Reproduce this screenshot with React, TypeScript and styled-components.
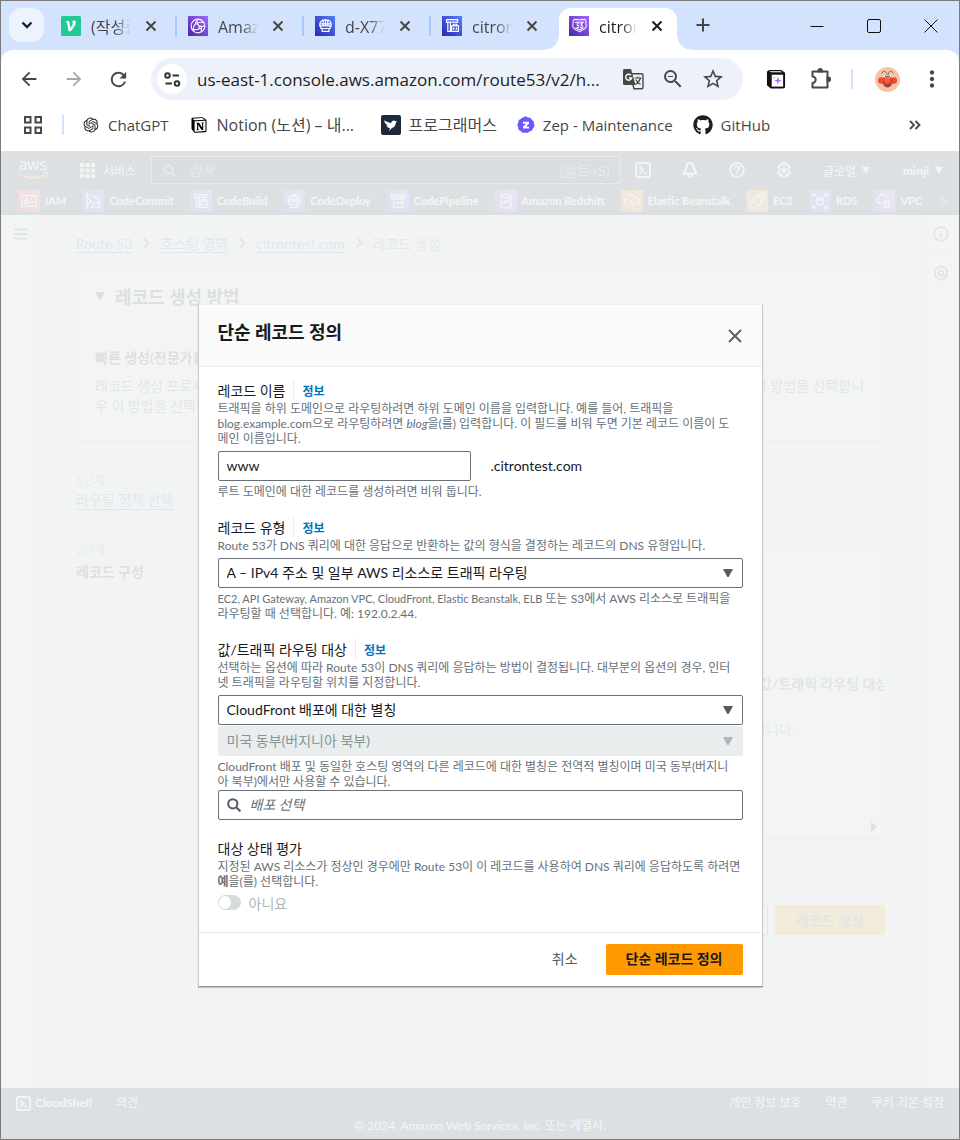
import React, { useState } from 'react';
import styled, { createGlobalStyle } from 'styled-components';
import { FaAws, FaGithub } from 'react-icons/fa';
import { RiOpenaiFill, RiNotionFill } from 'react-icons/ri';
import {
  MdArrowBack,
  MdArrowForward,
  MdMoreVert,
  MdOutlineZoomOut,
  MdRefresh,
  MdStarOutline,
} from 'react-icons/md';

const CONSOLE_FONT = 'Lato, "Noto Sans CJK KR", sans-serif';
const BROWSER_FONT = '"Open Sans", "Noto Sans CJK KR", sans-serif';

const GlobalStyle = createGlobalStyle`
  *, *::before, *::after { box-sizing: border-box; }
  body { margin: 0; background: #f2f4f4; }
  h1, h2, h3, p, ul, ol { margin: 0; padding: 0; }
  ul, ol { list-style: none; }
  button, input, select { font: inherit; color: inherit; margin: 0; }
  button { padding: 0; border: 0; background: none; cursor: pointer; }
  svg { display: block; flex: none; }
`;

const Window = styled.div`
  display: flex;
  flex-direction: column;
  min-height: 100vh;
  border: 1px solid #7b7b7b;
  font-family: ${BROWSER_FONT};
  overflow: hidden;
`;

/* ---------- browser: tab strip ---------- */

const TabStrip = styled.div`
  display: flex;
  height: 49px;
  padding: 7px 0 0 8px;
  background: #d3e3fd;
`;

const TabSearch = styled.button`
  display: grid;
  place-items: center;
  width: 35px;
  height: 34px;
  margin-right: 5px;
  border-radius: 12px;
  background: #ecf2fe;
`;

const Tab = styled.div<{ $active?: boolean }>`
  position: relative;
  display: flex;
  align-items: center;
  width: ${(p) => (p.$active ? 118 : 127)}px;
  height: 42px;
  margin-left: ${(p) => (p.$active ? 2 : 0)}px;
  padding: 0 ${(p) => (p.$active ? 12 : 17)}px 7px ${(p) => (p.$active ? 10 : 12)}px;
  border-radius: 12px 12px 0 0;
  background: ${(p) => (p.$active ? '#fff' : 'transparent')};
  color: ${(p) => (p.$active ? '#1f1f1f' : '#474747')};

  &::before,
  &::after {
    content: '';
    display: ${(p) => (p.$active ? 'block' : 'none')};
    position: absolute;
    bottom: 0;
    width: 14px;
    height: 14px;
  }
  &::before {
    left: -14px;
    background: radial-gradient(circle at 0 0, transparent 13px, #fff 14px);
  }
  &::after {
    right: -14px;
    background: radial-gradient(circle at 100% 0, transparent 13px, #fff 14px);
  }
`;

const TabTitle = styled.span`
  flex: 1;
  margin: 3px 0 0 10px;
  overflow: hidden;
  white-space: nowrap;
  font-size: 16px;
  line-height: 24px;
  mask-image: linear-gradient(to right, #000 60%, transparent);
`;

const TabClose = styled.button`
  display: grid;
  place-items: center;
  width: 16px;
  height: 16px;
  margin-left: 12px;
`;

const TabDivider = styled.span`
  align-self: center;
  width: 2px;
  height: 20px;
  margin: 0 -1px 7px;
  background: #a8c7fa;
`;

const TabAdd = styled.button`
  display: grid;
  place-items: center;
  width: 36px;
  height: 34px;
  margin-left: 8px;
`;

const WindowButtons = styled.div`
  display: flex;
  margin-left: auto;
`;

const WindowButton = styled.button`
  display: grid;
  place-items: center;
  width: 57px;
  height: 36px;
`;

/* ---------- browser: toolbar and bookmarks ---------- */

const ChromeBacking = styled.div`
  background: #d3e3fd;
`;

const Chrome = styled.div`
  padding-bottom: 8px;
  border-radius: 12px 12px 0 0;
  background: #fff;
`;

const Toolbar = styled.div`
  display: flex;
  align-items: center;
  padding: 8px 8px 8px 5px;
  color: #474747;
`;

const ToolButton = styled.button<{ $w?: number; $muted?: boolean }>`
  display: grid;
  flex: none;
  place-items: center;
  width: ${(p) => p.$w ?? 45}px;
  height: 40px;
  color: ${(p) => (p.$muted ? '#a9a9a9' : '#474747')};
`;

const AddressBar = styled.div`
  display: flex;
  flex: 1;
  align-items: center;
  min-width: 0;
  height: 42px;
  margin: 0 10px;
  padding: 0 10px 0 6px;
  border-radius: 21px;
  background: #ecf1fa;
`;

const SiteInfo = styled.button`
  display: grid;
  place-items: center;
  flex: none;
  width: 30px;
  height: 30px;
  border-radius: 50%;
  background: #fff;
`;

const AddressInput = styled.input`
  flex: 1;
  min-width: 0;
  margin-left: 10px;
  padding: 0;
  border: 0;
  outline: 0;
  background: none;
  color: #1f1f1f;
  font-size: 17px;
  text-overflow: ellipsis;
`;

const BarDivider = styled.span<{ $gap?: number }>`
  width: 2px;
  height: 20px;
  margin: 0 ${(p) => p.$gap ?? 0}px;
  background: #d3e3fd;
`;

const Bookmarks = styled.nav`
  display: flex;
  align-items: center;
  height: 35px;
  padding: 0 34px 2px 22px;
`;

const BookmarkList = styled.ul`
  display: flex;
  flex: 1;
  gap: 20px;
  margin-left: 18px;
`;

const Bookmark = styled.a<{ $korean?: boolean }>`
  display: flex;
  align-items: center;
  gap: 8px;
  color: #474747;
  font-size: ${(p) => (p.$korean ? 16 : 15)}px;
  line-height: 24px;
  white-space: nowrap;
  text-decoration: none;
`;

const BookmarkTitle = styled.span<{ $cut?: boolean }>`
  min-width: ${(p) => (p.$cut ? 144 : 0)}px;
`;

const AppsButton = styled.button`
  margin-right: 19px;
`;

/* ---------- console: global navigation ---------- */

const Console = styled.div`
  position: relative;
  display: flex;
  flex: 1;
  flex-direction: column;
  font-family: ${CONSOLE_FONT};
  font-size: 14px;
  color: #16191f;
`;

const GlobalNav = styled.header`
  background: #232f3e;
  color: #fff;
`;

const NavRow = styled.div`
  display: flex;
  align-items: center;
  height: 38px;
  padding: 0 16px 0 17px;
  font-size: 12px;
`;

const NavDivider = styled.span`
  width: 1px;
  height: 20px;
  background: #414d5c;
`;

const Logo = styled(FaAws)`
  margin-right: 16px;
`;

const NavButton = styled.button<{ $caret?: boolean; $last?: boolean }>`
  display: flex;
  flex: none;
  align-items: center;
  gap: ${(p) => (p.$caret ? 6 : 8)}px;
  padding: 0 ${(p) => (p.$last ? 0 : 15)}px 0 ${(p) => (p.$last ? 17 : 15)}px;
`;

const SearchBox = styled.label`
  display: flex;
  flex: 1;
  align-items: center;
  min-width: 0;
  height: 28px;
  padding: 0 9px 0 11px;
  border: 1px solid #879596;
  background: #0f1b2a;
  color: #879596;
  font-size: 14px;
`;

const SearchInput = styled.input`
  flex: 1;
  min-width: 0;
  padding: 0;
  margin-left: 12px;
  border: 0;
  outline: 0;
  background: none;
  font-style: italic;
  &::placeholder { color: #879596; opacity: 1; }
`;

const Favorites = styled.ul`
  display: flex;
  align-items: center;
  gap: 16px;
  height: 26px;
  padding: 0 12px 3px 17px;
  overflow: hidden;
  font-size: 11px;
  font-weight: 700;
`;

const Favorite = styled.a`
  display: flex;
  align-items: center;
  gap: 5px;
  color: #fff;
  white-space: nowrap;
  text-decoration: none;
`;

const FavoritesMore = styled.li`
  margin-left: auto;
  color: #687078;
`;

const ServiceTile = styled.span<{ $bg: string; $size?: number }>`
  display: grid;
  flex: none;
  place-items: center;
  width: ${(p) => p.$size ?? 22}px;
  height: ${(p) => p.$size ?? 22}px;
  background: ${(p) => p.$bg};
  color: #fff;
`;

/* ---------- console: page behind the dialog ---------- */

const Workspace = styled.div`
  display: flex;
  flex: 1;
  background: #f2f3f3;
`;

const Rail = styled.aside<{ $side: 'left' | 'right' }>`
  flex: none;
  width: ${(p) => (p.$side === 'left' ? 39 : 38)}px;
  border: 0 solid #d5dbdb;
  border-${(p) => (p.$side === 'left' ? 'right' : 'left')}-width: 1px;
  background: #fafafa;
  color: #545b64;
`;

const RailButton = styled.button`
  display: grid;
  place-items: center;
  width: 100%;
  height: 38px;
  & + & { border-top: 1px solid #d5dbdb; }
`;

const Main = styled.main`
  flex: 1;
  min-width: 0;
  padding: 17px 36px 40px;
`;

const Breadcrumbs = styled.ol`
  display: flex;
  align-items: center;
  gap: 10px;
  height: 22px;
  color: #687078;
`;

const Link = styled.a`
  color: #0073bb;
  text-decoration: none;
  border-bottom: 1px solid #0073bb;
  line-height: 16px;
`;

const Panel = styled.section`
  border: 1px solid #eaeded;
  border-bottom-color: #aab7b8;
  background: #fff;
`;

const MethodPanel = styled(Panel)`
  margin-top: 16px;
`;

const MethodTitle = styled.h2`
  display: flex;
  align-items: center;
  gap: 10px;
  height: 59px;
  padding: 0 18px 8px;
  border-bottom: 1px solid #eaeded;
  font-size: 18px;
`;

const MethodColumns = styled.div`
  display: grid;
  grid-template-columns: 1fr 1fr;
  gap: 40px;
  padding: 18px 18px 24px;
`;

const MethodName = styled.h3`
  margin-bottom: 8px;
  font-size: 14px;
  line-height: 20px;
  white-space: nowrap;
`;

const MethodText = styled.p`
  color: #545b64;
  line-height: 20px;
`;

const Wizard = styled.div`
  display: grid;
  grid-template-columns: 180px minmax(0, 1fr);
  gap: 20px;
  margin-top: 30px;
`;

const Step = styled.li`
  display: flex;
  flex-direction: column;
  align-items: flex-start;
  height: 70px;
  font-weight: 700;
  & + & {
    padding-top: 11px;
    border-top: 1px solid #d5dbdb;
  }
  &:first-child { height: 58px; }
`;

const StepNumber = styled.small`
  color: #879596;
  font-size: 12px;
  font-weight: 400;
  line-height: 20px;
`;

const StepLink = styled(Link)`
  font-weight: 400;
  line-height: 18px;
`;

const RecordsPanel = styled(Panel)`
  height: 288px;
  margin-top: 80px;
  padding-top: 112px;
  overflow: hidden;
`;

const RecordsTable = styled.table`
  width: 100%;
  border-collapse: collapse;
  white-space: nowrap;

  th {
    height: 37px;
    max-width: 0;
    padding: 0 0 0 482px;
    border: 1px solid #eaeded;
    border-width: 1px 0;
    overflow: hidden;
    color: #545b64;
    text-align: left;
  }
  td {
    height: 54px;
    padding: 0 89px 0 0;
    color: #687078;
    text-align: right;
  }
`;

const ScrollEnd = styled.div`
  display: flex;
  justify-content: flex-end;
  margin-top: 60px;
  padding: 5px;
  border-top: 1px solid #f2f3f3;
`;

const Actions = styled.div`
  display: flex;
  justify-content: flex-end;
  gap: 7px;
  margin-top: 66px;
`;

const PageButton = styled.button<{ $primary?: boolean }>`
  height: 30px;
  width: 110px;
  border: 1px solid ${(p) => (p.$primary ? '#ff9900' : '#545b64')};
  border-radius: 2px;
  background: ${(p) => (p.$primary ? '#ff9900' : '#fff')};
  color: #545b64;
  font-weight: 700;
`;

const Footer = styled.footer`
  padding: 5px 15px 3px;
  background: #232f3e;
  color: #fff;
  font-size: 12px;
  line-height: 20px;
`;

const FooterRow = styled.div`
  display: flex;
  gap: 24px;
`;

const FooterLink = styled.a<{ $push?: boolean; $strong?: boolean }>`
  display: flex;
  align-items: center;
  gap: 4px;
  margin-left: ${(p) => (p.$push ? 'auto' : '0')};
  color: #fff;
  font-weight: ${(p) => (p.$strong ? 700 : 400)};
  text-decoration: none;
`;

const Copyright = styled.p`
  padding-top: 3px;
  text-align: center;
`;

/* ---------- dialog ---------- */

const Overlay = styled.div`
  position: absolute;
  inset: 0;
  display: flex;
  align-items: center;
  justify-content: center;
  background: rgba(242, 244, 244, 0.9);
`;

const Dialog = styled.form`
  width: 100%;
  max-width: 565px;
  border: 1px solid #c4cacd;
  border-top-color: #eaeded;
  border-bottom-color: #8b9296;
  background: #fff;
  box-shadow: 0 1px 1px rgba(0, 28, 36, 0.2);
`;

const DialogHeader = styled.header`
  display: flex;
  justify-content: space-between;
  height: 62px;
  padding: 14px 20px 0 19px;
  border-bottom: 1px solid #eaeded;
  background: #fafafa;
`;

const DialogTitle = styled.h1`
  font-size: 18px;
  line-height: 26px;
`;

const DialogClose = styled.button`
  align-self: flex-start;
  margin-top: 10px;
  color: #545b64;
`;

const DialogBody = styled.div`
  display: flex;
  flex-direction: column;
  gap: 18px;
  padding: 13px 19px 19px;
`;

const Field = styled.div``;

const FieldHead = styled.div`
  display: flex;
  align-items: center;
  height: 21px;
`;

const FieldLabel = styled.label`
  line-height: 21px;
`;

const InfoLink = styled.a`
  height: 20px;
  margin-left: 8px;
  padding-left: 8px;
  border-left: 1px solid #eaeded;
  color: #0073bb;
  font-size: 12px;
  font-weight: 700;
  line-height: 23px;
  text-decoration: none;
`;

const Note = styled.p<{ $place?: 'above' | 'below' }>`
  margin: ${(p) => (p.$place === 'above' ? '0 0 5px' : p.$place === 'below' ? '3px 0 0' : '0')};
  color: #687078;
  font-size: 12px;
  line-height: 15px;
  white-space: nowrap;
`;

const ServiceNames = styled.span`
  font-size: 11px;
`;

const NameRow = styled.div`
  display: flex;
  align-items: center;
  gap: 20px;
`;

const TextInput = styled.input`
  width: 253px;
  height: 30px;
  padding: 0 8px;
  border: 1px solid #687078;
  border-radius: 2px;
  background: #fff;
`;

const SelectBox = styled.div`
  position: relative;
  display: flex;
  align-items: center;
  & + & { margin-top: 1px; }
  svg {
    position: absolute;
    right: 10px;
    pointer-events: none;
    color: #545b64;
  }
  select:disabled + svg { color: #aab7b8; }
`;

const Select = styled.select`
  width: 100%;
  height: 30px;
  padding: 0 30px 0 8px;
  border: 1px solid #687078;
  border-radius: 2px;
  appearance: none;
  background: #fff;
  &:disabled {
    border-color: #eaeded;
    background: #eaeded;
    color: #879596;
    opacity: 1;
  }
`;

const DistributionBox = styled.label`
  display: flex;
  align-items: center;
  gap: 9px;
  height: 30px;
  margin-top: 1px;
  padding: 0 8px;
  border: 1px solid #687078;
  border-radius: 2px;
  color: #545b64;
`;

const DistributionInput = styled.input`
  flex: 1;
  padding: 0;
  border: 0;
  outline: 0;
  background: none;
  &::placeholder {
    color: #687078;
    font-style: italic;
    opacity: 1;
  }
`;

const ToggleRow = styled.label`
  display: flex;
  align-items: center;
  gap: 8px;
  height: 20px;
  margin-top: 4px;
  color: #aab7b8;
`;

const Toggle = styled.input`
  appearance: none;
  width: 23px;
  height: 15px;
  border-radius: 8px;
  background: #d5dbdb;
  &::before {
    content: '';
    display: block;
    width: 12px;
    height: 13px;
    margin: 1px;
    border-radius: 50%;
    background: #fff;
  }
`;

const DialogFooter = styled.footer`
  display: flex;
  justify-content: flex-end;
  gap: 8px;
  padding: 11px 19px;
  border-top: 1px solid #eaeded;
`;

const DialogButton = styled.button<{ $primary?: boolean }>`
  height: 31px;
  padding: 0 20px 2px;
  border-radius: 2px;
  background: ${(p) => (p.$primary ? '#ff9900' : 'transparent')};
  color: ${(p) => (p.$primary ? '#16191f' : '#545b64')};
  font-weight: ${(p) => (p.$primary ? 700 : 400)};
`;

/* ---------- drawings ---------- */

type Drawing = { size?: number };

const Line: React.FC<{ size?: number; w?: number; children: React.ReactNode }> = ({ size = 18, w = 1.4, children }) => (
  <svg width={size} height={size} viewBox="0 0 20 20" fill="none" stroke="currentColor" strokeWidth={w} aria-hidden>
    {children}
  </svg>
);

const Triangle: React.FC<{ dir?: 'down' | 'right'; size?: number }> = ({ dir = 'down', size = 10 }) => (
  <svg width={size} height={size} viewBox="0 0 10 10" fill="currentColor" aria-hidden>
    <path d={dir === 'down' ? 'M0 1h10L5.6 9H4.4z' : 'M2 0v10l6-5z'} />
  </svg>
);

const Magnifier: React.FC<Drawing> = ({ size = 14 }) => (
  <svg width={size} height={size} viewBox="0 0 14 14" fill="none" stroke="currentColor" strokeWidth="2" aria-hidden>
    <circle cx="5.8" cy="5.8" r="4.6" />
    <path d="M9 9l4.4 4.4" />
  </svg>
);

const Shell: React.FC<Drawing> = ({ size = 16 }) => (
  <svg width={size} height={size} viewBox="0 0 16 16" fill="none" stroke="currentColor" strokeWidth="2" aria-hidden>
    <rect x="1" y="1" width="14" height="14" rx="1.5" />
    <path d="M4.5 4.5L8 8l-3.5 3.5M9 11.2h3" />
  </svg>
);

const GlobeStack: React.FC<Drawing> = ({ size }) => (
  <Line size={size}>
    <path d="M4.5 10.5H3.2C2.5 6 5.5 3 10 3s7.5 3 6.8 7.5h-1.3M3.2 8h13.600M10 3v7.5M7.5 10.5C6.5 7 7.5 4 10 3c2.5 1 3.5 4 2.5 7.5" />
    <path d="M4.5 10.5h11v3h-11zM6 13.5h8V17H6z" />
  </Line>
);

const BuildBlocks: React.FC<Drawing> = ({ size }) => (
  <Line size={size}>
    <path d="M3 3h13v3H3zM4.5 6v11h3V6M9 10.5h8V17H9zM11 10.5V8.5h4v2M12 12.5l-1 1.2 1 1.2M14 12.5l1 1.2-1 1.2" />
  </Line>
);

const CommitBranches: React.FC<Drawing> = ({ size }) => (
  <Line size={size}>
    <path d="M3.5 4v12M3.5 6l5 4-5 5M8 4h3l2 3h4v10H8l3-4M12 10l-1 1.5 1 1.5M15 10l1 1.5-1 1.5" />
    <circle cx="3.5" cy="3" r="1" />
    <circle cx="3.5" cy="17" r="1" />
  </Line>
);

const PipelineGlyph: React.FC<Drawing> = ({ size }) => (
  <Line size={size}>
    <path d="M2.5 3h15v4.5h-15zM5 7.5V17h10V7.5M2.5 5.200h15M8 11l-1.2 1.3L8 13.600M12 11l1.2 1.3-1.2 1.3M10.5 10.5l-1 3.600" />
  </Line>
);

const IdCard: React.FC<Drawing> = ({ size }) => (
  <Line size={size}>
    <rect x="2" y="4" width="16" height="12" />
    <path d="M5 9.5h4V13H5zM6 9.5V7h2v2.5M11.5 8h2M14.5 8h1M11.5 11.5h4" />
  </Line>
);

const Cylinder: React.FC<Drawing> = ({ size }) => (
  <Line size={size}>
    <ellipse cx="10" cy="4.5" rx="5.5" ry="2" />
    <path d="M4.5 4.5v11c0 1 2.5 2 5.5 2s5.5-1 5.5-2v-11M7 13.5l2-4 2 2 2-3.5" />
  </Line>
);

const CloudTree: React.FC<Drawing> = ({ size }) => (
  <Line size={size}>
    <path d="M6.5 14H5a3.2 3.2 0 0 1-.4-6.3C5 4.8 7 3 9.5 3c2.2 0 3.7 1.3 4.3 3.2C16.3 6.5 18 8 18 10.3c0 2.2-1.5 3.7-4 3.7M10 18V7M10 12L7 9.5M10 14.5l3.2-2.7" />
  </Line>
);

const Squares: React.FC<Drawing> = ({ size }) => (
  <Line size={size}>
    <path d="M7 6h7.5v8H7zM11 6V2h7v7h-3.5M7 11H2v7h7.5v-4M10 4v2M12.5 14v2M5 8.5h2M14.5 11.5h2" />
  </Line>
);

const DatabaseArrows: React.FC<Drawing> = ({ size }) => (
  <Line size={size}>
    <ellipse cx="10" cy="7.5" rx="3.5" ry="1.5" />
    <path d="M6.5 7.5v5c0 .8 1.5 1.5 3.5 1.5s3.5-.7 3.5-1.5v-5M2 5V2h3M2 2l3 3M15 2h3v3M18 2l-3 3M2 15v3h3M2 18l3-3M18 15v3h-3M18 18l-3-3" />
  </Line>
);

const CloudShieldGlyph: React.FC<Drawing> = ({ size }) => (
  <Line size={size}>
    <path d="M8 12.5H5A3 3 0 0 1 4.6 6.6C5 4 7 2.5 9.2 2.5c2 0 3.5 1 4 3 1.8.1 3.3 1 3.8 2.5" />
    <circle cx="13.5" cy="13.5" r="4" />
    <path d="M12.2 10v7M14.800 10v7" />
  </Line>
);

const NetworkGlobe: React.FC<Drawing> = ({ size }) => (
  <Line size={size} w={1.2}>
    <circle cx="10" cy="10" r="7.6" />
    <circle cx="8.5" cy="6.5" r="1.3" />
    <circle cx="12.5" cy="11.5" r="1.4" />
    <path d="M7.5 7.5c-2 1.5-3 4.500-2.3 8.300M9.300 7.600l2.300 2.800M9.800 6.300c2.500-.8 4.700-.5 6.200-.1M8.500 5.200C8.800 4 9.500 3 10.500 2.500M11.800 12.700c-1.800 1-4 1.600-6.300 1.300M13.500 12.500c.5 1.500.5 3-.2 4.300M13.800 10.800c1-.8 2-1 3.500-.8" />
  </Line>
);

const RouteShield: React.FC<Drawing> = ({ size }) => (
  <Line size={size} w={1.2}>
    <path d="M4 2.500c1 .8 2 .9 3 .2 1 .6 2 .8 3 .8s2-.2 3-.8c1 .7 2 .6 3-.2l1.800 2.500c-1 2 .2 4 .2 6 0 3-4.500 4-8 6.500C6.500 15 2 14 2 11c0-2 1.200-4 .2-6z" />
    <path d="M4.500 6c1 .5 2 .3 2.800-.2 1.700.5 3.700.5 5.400 0 .8.500 1.800.7 2.800.2M5 12.500c1.500 1 3.500 1.700 5 2.700 1.500-1 3.500-1.700 5-2.700M9.300 8H7.300v1.800c2.500-.3 2.500 2.500.2 2.500h-.8M10.800 8h2.400l-1.300 1.600c2 0 2 2.700 0 2.700h-1.200" />
  </Line>
);

const CloseGlyph = () => (
  <svg width="12" height="12" viewBox="0 0 12 12" stroke="currentColor" strokeWidth="2" aria-hidden>
    <path d="M1.500 1.500l9 9M10.500 1.500l-9 9" />
  </svg>
);

const Velog = () => (
  <svg width="20" height="20" viewBox="0 0 20 20" aria-hidden>
    <rect width="20" height="20" rx="1.500" fill="#20c997" />
    <path d="M5 5.500l3-.8L9.400 12c1.600-2 2.600-4 2.300-5.400-.1-.5-.6-.8-.3-1.300.5-1 3.200-1.300 3.400.6.200 2.600-2.400 6.400-5.300 9.300H7.600L6 6.700l-1-.3z" fill="#fff" />
  </svg>
);

const Programmers = () => (
  <svg width="20" height="20" viewBox="0 0 20 20" aria-hidden>
    <rect width="20" height="20" rx="2" fill="#1e2a3c" />
    <path d="M3 5.500l7 2.800c.5-2 2-3 3.700-2.600.8.2 1.300.7 2.800.8-1.300.6-1.600 1-1.800 2.200-.4 2.300-1.600 3.700-3.900 4.300L8.200 16.200l.7-3.200C7 12.800 6 12 5.500 10.500l1.300-.2C4.800 9.200 3.800 8 3 5.500z" fill="#fff" />
  </svg>
);

const Zep = () => (
  <svg width="18" height="18" viewBox="0 0 18 18" aria-hidden>
    <path d="M6.200 1.500C8 .1 9.500.4 10.800 1.600c1.700-.2 3.300.4 3.900 2.200 1.700.8 2.600 2.200 2.200 4 .8 1.700.7 3.400-.9 4.500-.3 1.900-1.500 3-3.400 3-1.200 1.500-2.700 2.200-4.400 1.300-1.800.6-3.400.1-4.300-1.600C2 14.300.9 13 1.200 11.200.1 9.700.1 8.200 1.300 6.700 1.200 4.900 2 3.500 3.800 3 4.300 2.200 5.200 1.700 6.200 1.500z" fill="#6758ff" />
    <path d="M6 5.800h6v2L8.800 10.600H12v2H6v-2l3.200-2.800H6z" fill="#fff" />
  </svg>
);

const TranslateGlyph = () => (
  <svg width="21" height="21" viewBox="0 0 21 21" fill="none" aria-hidden>
    <path d="M9 4.800h9.500a1.500 1.500 0 0 1 1.500 1.500v12a1.500 1.500 0 0 1-1.500 1.500h-7.500l-1-3.800" stroke="#474747" strokeWidth="1.400" />
    <path d="M11.500 9h7M15 7.500V9M17.500 9c-.8 3-2.500 5-5 6.500M12.800 10.500c1 2 2.700 3.800 4.700 5" stroke="#474747" strokeWidth="1.200" />
    <path d="M1.500 0H8l4.500 16H1.500A1.500 1.500 0 0 1 0 14.500v-13A1.500 1.500 0 0 1 1.500 0z" fill="#474747" />
    <path d="M8 6.300A3 3 0 1 0 8.600 9H5.800" stroke="#fff" strokeWidth="1.400" />
  </svg>
);

const PuzzleGlyph = () => (
  <svg width="24" height="24" viewBox="0 0 24 24" fill="none" stroke="currentColor" strokeWidth="2" aria-hidden>
    <path d="M4 4.500H18.500V20.500H3.500v-4.600a3.200 3.200 0 0 0 0-6.400V4.500z" strokeLinejoin="round" />
    <path d="M9.500 4.500V3.600a1.700 1.700 0 0 1 3.400 0v.9zM18.500 10.500h.9a1.700 1.700 0 0 1 0 3.400h-.9z" fill="currentColor" />
  </svg>
);

const NotionSpark = () => (
  <svg width="20" height="20" viewBox="0 0 21 21" aria-hidden>
    <path d="M1 2.500L3.500 1H16l4 3v15.500L18 20.500H5L1 17z" fill="#111" />
    <path d="M6 6h12v12.500H6z" fill="#fff" />
    <path d="M3.500 3l1-.7h11l1.500 1.200H5.500z" fill="#fff" />
    <path d="M12.500 8l1 3.200 3.200 1-3.200 1-1 3.200-1-3.200-3.200-1 3.200-1z" fill="#b26bff" />
    <path d="M8.500 7l.5 1.500 1.500.5-1.500.5L8.500 11 8 9.500 6.500 9 8 8.500z" fill="#ffc266" />
  </svg>
);

const Avatar = () => (
  <svg width="25" height="25" viewBox="0 0 25 25" aria-hidden>
    <circle cx="12.500" cy="12.500" r="12.500" fill="#f6c4a4" />
    <path d="M12 8C11 3.500 9 3 6.500 6.500M13 8c1-4.500 3-5 5.500-1.500" fill="none" stroke="#7d6054" />
    <circle cx="6.200" cy="13.500" r="3.200" fill="#ee4b34" />
    <circle cx="18.800" cy="13.500" r="3.200" fill="#ee4b34" />
    <ellipse cx="12.500" cy="14.500" rx="5" ry="5.500" fill="#c8442f" />
    <circle cx="12.500" cy="13" r="3.200" fill="#ff5a3c" />
    <path d="M8.500 17c2 1.500 6 1.500 8 0-1 4.500-7 4.500-8 0z" fill="#8d4450" />
    <ellipse cx="10.500" cy="9" rx="1.300" ry="1.600" fill="#fff" />
    <ellipse cx="14.500" cy="9" rx="1.300" ry="1.600" fill="#fff" />
    <circle cx="10.800" cy="9.200" r="0.800" fill="#33211c" />
    <circle cx="14.200" cy="9.200" r="0.800" fill="#33211c" />
  </svg>
);

const Crumb = () => (
  <svg width="8" height="12" viewBox="0 0 8 12" fill="none" stroke="currentColor" strokeWidth="2" aria-hidden>
    <path d="M1.500 1l5 5-5 5" />
  </svg>
);

/* ---------- data ---------- */

const PURPLE = 'linear-gradient(45deg, #4d27a8, #a166ff)';
const BLUE = 'linear-gradient(45deg, #2e27ad, #527fff)';
const ORANGE = 'linear-gradient(45deg, #c8511b, #ff9900)';
const RED = 'linear-gradient(45deg, #bd0816, #ff5252)';

const tabs = [
  { title: '(작성중)', icon: <Velog /> },
  { title: 'Amazon', icon: <ServiceTile $bg={PURPLE} $size={20}><NetworkGlobe size={18} /></ServiceTile> },
  { title: 'd-X77A', icon: <ServiceTile $bg={BLUE} $size={20}><GlobeStack size={17} /></ServiceTile> },
  { title: 'citront', icon: <ServiceTile $bg={BLUE} $size={20}><BuildBlocks size={17} /></ServiceTile> },
  { title: 'citront', icon: <ServiceTile $bg={PURPLE} $size={20}><RouteShield size={17} /></ServiceTile> },
];

const bookmarks = [
  { title: 'ChatGPT', icon: <RiOpenaiFill size={18} color="#222" /> },
  { title: 'Notion (노션) – 내...', icon: <RiNotionFill size={20} color="#000" />, korean: true, cut: true },
  { title: '프로그래머스', icon: <Programmers />, korean: true },
  { title: 'Zep - Maintenance', icon: <Zep /> },
  { title: 'GitHub', icon: <FaGithub size={20} color="#1b1f23" /> },
];

const favorites = [
  { name: 'IAM', bg: RED, icon: <IdCard /> },
  { name: 'CodeCommit', bg: BLUE, icon: <CommitBranches /> },
  { name: 'CodeBuild', bg: BLUE, icon: <BuildBlocks /> },
  { name: 'CodeDeploy', bg: BLUE, icon: <GlobeStack /> },
  { name: 'CodePipeline', bg: BLUE, icon: <PipelineGlyph /> },
  { name: 'Amazon Redshift', bg: PURPLE, icon: <Cylinder /> },
  { name: 'Elastic Beanstalk', bg: ORANGE, icon: <CloudTree /> },
  { name: 'EC2', bg: ORANGE, icon: <Squares /> },
  { name: 'RDS', bg: BLUE, icon: <DatabaseArrows /> },
  { name: 'VPC', bg: PURPLE, icon: <CloudShieldGlyph /> },
];

/* ---------- sections ---------- */

const Browser = () => (
  <>
    <TabStrip>
      <TabSearch aria-label="탭 검색">
        <svg width="12" height="8" viewBox="0 0 12 8" fill="none" stroke="#1f1f1f" strokeWidth="2.400" aria-hidden>
          <path d="M1.500 1.500L6 6l4.500-4.500" />
        </svg>
      </TabSearch>
      {tabs.map((tab, i) => (
        <React.Fragment key={i}>
          <Tab $active={i === 4}>
            {tab.icon}
            <TabTitle>{tab.title}</TabTitle>
            <TabClose aria-label="탭 닫기"><CloseGlyph /></TabClose>
          </Tab>
          {i < 3 && <TabDivider />}
        </React.Fragment>
      ))}
      <TabAdd aria-label="새 탭">
        <svg width="14" height="14" viewBox="0 0 14 14" stroke="#474747" strokeWidth="2" aria-hidden>
          <path d="M7 0.500v13M0.500 7h13" />
        </svg>
      </TabAdd>
      <WindowButtons>
        <WindowButton aria-label="최소화">
          <svg width="14" height="14" viewBox="0 0 14 14" stroke="#111" aria-hidden><path d="M0.500 7.500h13" /></svg>
        </WindowButton>
        <WindowButton aria-label="최대화">
          <svg width="14" height="14" viewBox="0 0 14 14" stroke="#111" fill="none" aria-hidden>
            <rect x="0.500" y="0.500" width="13" height="13" rx="1.500" />
          </svg>
        </WindowButton>
        <WindowButton aria-label="닫기">
          <svg width="14" height="14" viewBox="0 0 14 14" stroke="#111" aria-hidden><path d="M0.500 0.500l13 13M13.500 0.500l-13 13" /></svg>
        </WindowButton>
      </WindowButtons>
    </TabStrip>
    <ChromeBacking>
      <Chrome>
        <Toolbar>
          <ToolButton aria-label="뒤로"><MdArrowBack size={22} /></ToolButton>
          <ToolButton aria-label="앞으로" $muted><MdArrowForward size={22} /></ToolButton>
          <ToolButton aria-label="새로고침"><MdRefresh size={23} /></ToolButton>
          <AddressBar>
            <SiteInfo aria-label="사이트 정보">
              <svg width="17" height="15" viewBox="0 0 17 15" fill="none" stroke="#303030" strokeWidth="1.900" aria-hidden>
                <circle cx="3.500" cy="3.500" r="2.300" />
                <path d="M8.500 3.500H15M1.500 11.500H8" />
                <circle cx="13" cy="11.500" r="2.300" />
              </svg>
            </SiteInfo>
            <AddressInput aria-label="주소" readOnly value="us-east-1.console.aws.amazon.com/route53/v2/h..." />
            <ToolButton $w={40} aria-label="번역"><TranslateGlyph /></ToolButton>
            <ToolButton $w={40} aria-label="축소"><MdOutlineZoomOut size={24} /></ToolButton>
            <ToolButton $w={40} aria-label="북마크 추가"><MdStarOutline size={24} /></ToolButton>
          </AddressBar>
          <ToolButton aria-label="Notion"><NotionSpark /></ToolButton>
          <ToolButton aria-label="확장 프로그램"><PuzzleGlyph /></ToolButton>
          <BarDivider $gap={8} />
          <ToolButton $w={52} aria-label="프로필"><Avatar /></ToolButton>
          <ToolButton $w={38} aria-label="메뉴"><MdMoreVert size={26} /></ToolButton>
        </Toolbar>
        <Bookmarks aria-label="북마크">
          <AppsButton aria-label="앱">
            <svg width="20" height="20" viewBox="0 0 20 20" fill="none" stroke="#474747" strokeWidth="2" aria-hidden>
              <path d="M2 2h5.500v5.500H2zM12.500 2H18v5.500h-5.500zM2 12.500h5.500V18H2zM12.500 12.500H18V18h-5.500z" />
            </svg>
          </AppsButton>
          <BarDivider />
          <BookmarkList>
            {bookmarks.map((b) => (
              <li key={b.title}>
                <Bookmark href="#" $korean={b.korean}>
                  {b.icon}
                  <BookmarkTitle $cut={b.cut}>{b.title}</BookmarkTitle>
                </Bookmark>
              </li>
            ))}
          </BookmarkList>
          <ToolButton $w={20} aria-label="더보기">
            <svg width="12" height="10" viewBox="0 0 12 10" fill="none" stroke="#474747" strokeWidth="1.800" aria-hidden>
              <path d="M1 1l4 4-4 4M6.500 1l4 4-4 4" />
            </svg>
          </ToolButton>
        </Bookmarks>
      </Chrome>
    </ChromeBacking>
  </>
);

const ConsoleNav = () => (
  <GlobalNav>
    <NavRow>
      <svg width="0" height="0" aria-hidden>
        <linearGradient id="aws-ink" x1="0" y1="0" x2="0" y2="1">
          <stop offset="0.640" stopColor="#fff" />
          <stop offset="0.640" stopColor="#ff9900" />
        </linearGradient>
      </svg>
      <Logo size={30} fill="url(#aws-ink)" aria-label="AWS" />
      <NavDivider />
      <NavButton>
        <svg width="15" height="15" viewBox="0 0 15 15" fill="currentColor" aria-hidden>
          {[0, 5.5, 11].map((y) => [0, 5.5, 11].map((x) => <rect key={`${x}-${y}`} x={x} y={y} width="4" height="4" />))}
        </svg>
        서비스
      </NavButton>
      <SearchBox>
        <Magnifier size={13} />
        <SearchInput aria-label="검색" placeholder="검색" />
        [알트+S]
      </SearchBox>
      <NavButton aria-label="CloudShell"><Shell /></NavButton>
      <NavDivider />
      <NavButton aria-label="알림">
        <svg width="16" height="16" viewBox="0 0 16 16" fill="none" stroke="currentColor" strokeWidth="2" aria-hidden>
          <path d="M8 1C5.500 1 4.500 3 4.500 5.500L1.500 11.500h13l-3-6C11.500 3 10.500 1 8 1zM6 12.500c0 3 4 3 4 0" />
        </svg>
      </NavButton>
      <NavDivider />
      <NavButton aria-label="도움말">
        <svg width="16" height="16" viewBox="0 0 16 16" fill="none" stroke="currentColor" strokeWidth="1.800" aria-hidden>
          <circle cx="8" cy="8" r="6.800" />
          <path d="M5.800 6.500c0-3 4.500-2.800 4.500-.3C10.300 7.800 8 7.800 8 9.600M8 10.800v1.700" />
        </svg>
      </NavButton>
      <NavDivider />
      <NavButton aria-label="설정">
        <svg width="16" height="16" viewBox="0 0 16 16" fill="none" stroke="currentColor" strokeWidth="2" aria-hidden>
          <path d="M6.500 1.200h3l.6 2 2-.5 1.800 2.600L12.600 7v2l1.300 1.700-1.800 2.600-2-.5-.6 2h-3l-.6-2-2 .5-1.800-2.600L3.400 9V7L2.100 5.300l1.800-2.600 2 .5z" />
          <circle cx="8" cy="8" r="1.800" />
        </svg>
      </NavButton>
      <NavDivider />
      <NavButton $caret>글로벌<Triangle size={8} /></NavButton>
      <NavDivider />
      <NavButton $caret $last><b>minji</b><Triangle size={8} /></NavButton>
    </NavRow>
    <Favorites>
      {favorites.map((f) => (
        <li key={f.name}>
          <Favorite href="#"><ServiceTile $bg={f.bg}>{f.icon}</ServiceTile>{f.name}</Favorite>
        </li>
      ))}
      <FavoritesMore><Crumb /></FavoritesMore>
    </Favorites>
  </GlobalNav>
);

const Page = () => (
  <Workspace>
    <Rail $side="left">
      <RailButton aria-label="탐색 열기">
        <svg width="13" height="12" viewBox="0 0 14 12" stroke="currentColor" strokeWidth="2" aria-hidden>
          <path d="M0 1h14M0 6h14M0 11h14" />
        </svg>
      </RailButton>
    </Rail>
    <Main>
      <Breadcrumbs>
        <li><Link href="#">Route 53</Link></li>
        <Crumb />
        <li><Link href="#">호스팅 영역</Link></li>
        <Crumb />
        <li><Link href="#">citrontest.com</Link></li>
        <Crumb />
        <li>레코드 생성</li>
      </Breadcrumbs>
      <MethodPanel>
        <MethodTitle><Triangle />레코드 생성 방법</MethodTitle>
        <MethodColumns>
          <div>
            <MethodName>빠른 생성(전문가용)</MethodName>
            <MethodText>레코드 생성 프로세스를 잘 알고 있으므로 안내가 필요 없는 경우 이 방법을 선택합니다.</MethodText>
          </div>
          <div>
            <MethodName>마법사</MethodName>
            <MethodText>레코드 생성 과정의 단계별 안내가 필요하면 이 방법을 선택합니다.</MethodText>
          </div>
        </MethodColumns>
      </MethodPanel>
      <Wizard>
        <ol>
          <Step><StepNumber>1단계</StepNumber><StepLink href="#">라우팅 정책 선택</StepLink></Step>
          <Step><StepNumber>2단계</StepNumber>레코드 구성</Step>
        </ol>
        <RecordsPanel>
          <RecordsTable>
            <thead><tr><th>값/트래픽 라우팅 대상</th></tr></thead>
            <tbody><tr><td>여기에 표시됩니다.</td></tr></tbody>
          </RecordsTable>
          <ScrollEnd><Triangle dir="right" /></ScrollEnd>
        </RecordsPanel>
      </Wizard>
      <Actions>
        <PageButton>이전</PageButton>
        <PageButton $primary>레코드 생성</PageButton>
      </Actions>
    </Main>
    <Rail $side="right">
      <RailButton aria-label="정보">
        <svg width="16" height="16" viewBox="0 0 16 16" fill="none" stroke="currentColor" strokeWidth="1.800" aria-hidden>
          <circle cx="8" cy="8" r="6.800" />
          <path d="M8 7v5M8 4v1.800" />
        </svg>
      </RailButton>
      <RailButton aria-label="기록">
        <svg width="16" height="16" viewBox="0 0 16 16" fill="none" stroke="currentColor" strokeWidth="1.800" aria-hidden>
          <path d="M8 1l6 3.500v7L8 15l-6-3.500v-7z" />
          <circle cx="8" cy="8" r="2.500" />
          <path d="M9 9l4 2.500" />
        </svg>
      </RailButton>
    </Rail>
  </Workspace>
);

const RecordDialog = () => {
  const [name, setName] = useState('www');
  return (
    <Overlay>
      <Dialog role="dialog" aria-labelledby="dialog-title" onSubmit={(e) => e.preventDefault()}>
        <DialogHeader>
          <DialogTitle id="dialog-title">단순 레코드 정의</DialogTitle>
          <DialogClose type="button" aria-label="닫기">
            <svg width="14" height="14" viewBox="0 0 14 14" stroke="currentColor" strokeWidth="1.800" aria-hidden>
              <path d="M1 1l12 12M13 1L1 13" />
            </svg>
          </DialogClose>
        </DialogHeader>
        <DialogBody>
          <Field>
            <FieldHead>
              <FieldLabel htmlFor="record-name">레코드 이름</FieldLabel>
              <InfoLink href="#">정보</InfoLink>
            </FieldHead>
            <Note $place="above">
              트래픽을 하위 도메인으로 라우팅하려면 하위 도메인 이름을 입력합니다. 예를 들어, 트래픽을<br />
              blog.example.com으로 라우팅하려면 <i>blog</i>을(를) 입력합니다. 이 필드를 비워 두면 기본 레코드 이름이 도<br />
              메인 이름입니다.
            </Note>
            <NameRow>
              <TextInput id="record-name" value={name} onChange={(e) => setName(e.target.value)} />
              <span>.citrontest.com</span>
            </NameRow>
            <Note $place="below">루트 도메인에 대한 레코드를 생성하려면 비워 둡니다.</Note>
          </Field>
          <Field>
            <FieldHead>
              <FieldLabel htmlFor="record-type">레코드 유형</FieldLabel>
              <InfoLink href="#">정보</InfoLink>
            </FieldHead>
            <Note $place="above">Route 53가 DNS 쿼리에 대한 응답으로 반환하는 값의 형식을 결정하는 레코드의 DNS 유형입니다.</Note>
            <SelectBox>
              <Select id="record-type"><option>A – IPv4 주소 및 일부 AWS 리소스로 트래픽 라우팅</option></Select>
              <Triangle />
            </SelectBox>
            <Note $place="below">
              <ServiceNames>EC2, API Gateway, Amazon VPC, CloudFront, Elastic Beanstalk, ELB</ServiceNames> 또는 S3에서 AWS 리소스로 트래픽을<br />
              라우팅할 때 선택합니다. 예: 192.0.2.44.
            </Note>
          </Field>
          <Field>
            <FieldHead>
              <FieldLabel htmlFor="record-target">값/트래픽 라우팅 대상</FieldLabel>
              <InfoLink href="#">정보</InfoLink>
            </FieldHead>
            <Note $place="above">
              선택하는 옵션에 따라 Route 53이 DNS 쿼리에 응답하는 방법이 결정됩니다. 대부분의 옵션의 경우, 인터<br />
              넷 트래픽을 라우팅할 위치를 지정합니다.
            </Note>
            <SelectBox>
              <Select id="record-target"><option>CloudFront 배포에 대한 별칭</option></Select>
              <Triangle />
            </SelectBox>
            <SelectBox>
              <Select aria-label="리전" disabled><option>미국 동부(버지니아 북부)</option></Select>
              <Triangle />
            </SelectBox>
            <Note $place="below">
              CloudFront 배포 및 동일한 호스팅 영역의 다른 레코드에 대한 별칭은 전역적 별칭이며 미국 동부(버지니<br />
              아 북부)에서만 사용할 수 있습니다.
            </Note>
            <DistributionBox>
              <Magnifier size={14} />
              <DistributionInput aria-label="배포 선택" placeholder="배포 선택" />
            </DistributionBox>
          </Field>
          <Field>
            <FieldHead>
              <FieldLabel htmlFor="health">대상 상태 평가</FieldLabel>
            </FieldHead>
            <Note>
              지정된 AWS 리소스가 정상인 경우에만 Route 53이 이 레코드를 사용하여 DNS 쿼리에 응답하도록 하려면<br />
              <b>예</b>을(를) 선택합니다.
            </Note>
            <ToggleRow>
              <Toggle id="health" type="checkbox" role="switch" disabled />
              아니요
            </ToggleRow>
          </Field>
        </DialogBody>
        <DialogFooter>
          <DialogButton type="button">취소</DialogButton>
          <DialogButton $primary type="submit">단순 레코드 정의</DialogButton>
        </DialogFooter>
      </Dialog>
    </Overlay>
  );
};

export default function App() {
  return (
    <Window>
      <GlobalStyle />
      <Browser />
      <Console>
        <ConsoleNav />
        <Page />
        <Footer>
          <FooterRow>
            <FooterLink href="#" $strong><Shell size={15} />CloudShell</FooterLink>
            <FooterLink href="#">의견</FooterLink>
            <FooterLink href="#" $push>개인 정보 보호</FooterLink>
            <FooterLink href="#">약관</FooterLink>
            <FooterLink href="#">쿠키 기본 설정</FooterLink>
          </FooterRow>
          <Copyright>© 2024, Amazon Web Services, Inc. 또는 계열사.</Copyright>
        </Footer>
        <RecordDialog />
      </Console>
    </Window>
  );
}
